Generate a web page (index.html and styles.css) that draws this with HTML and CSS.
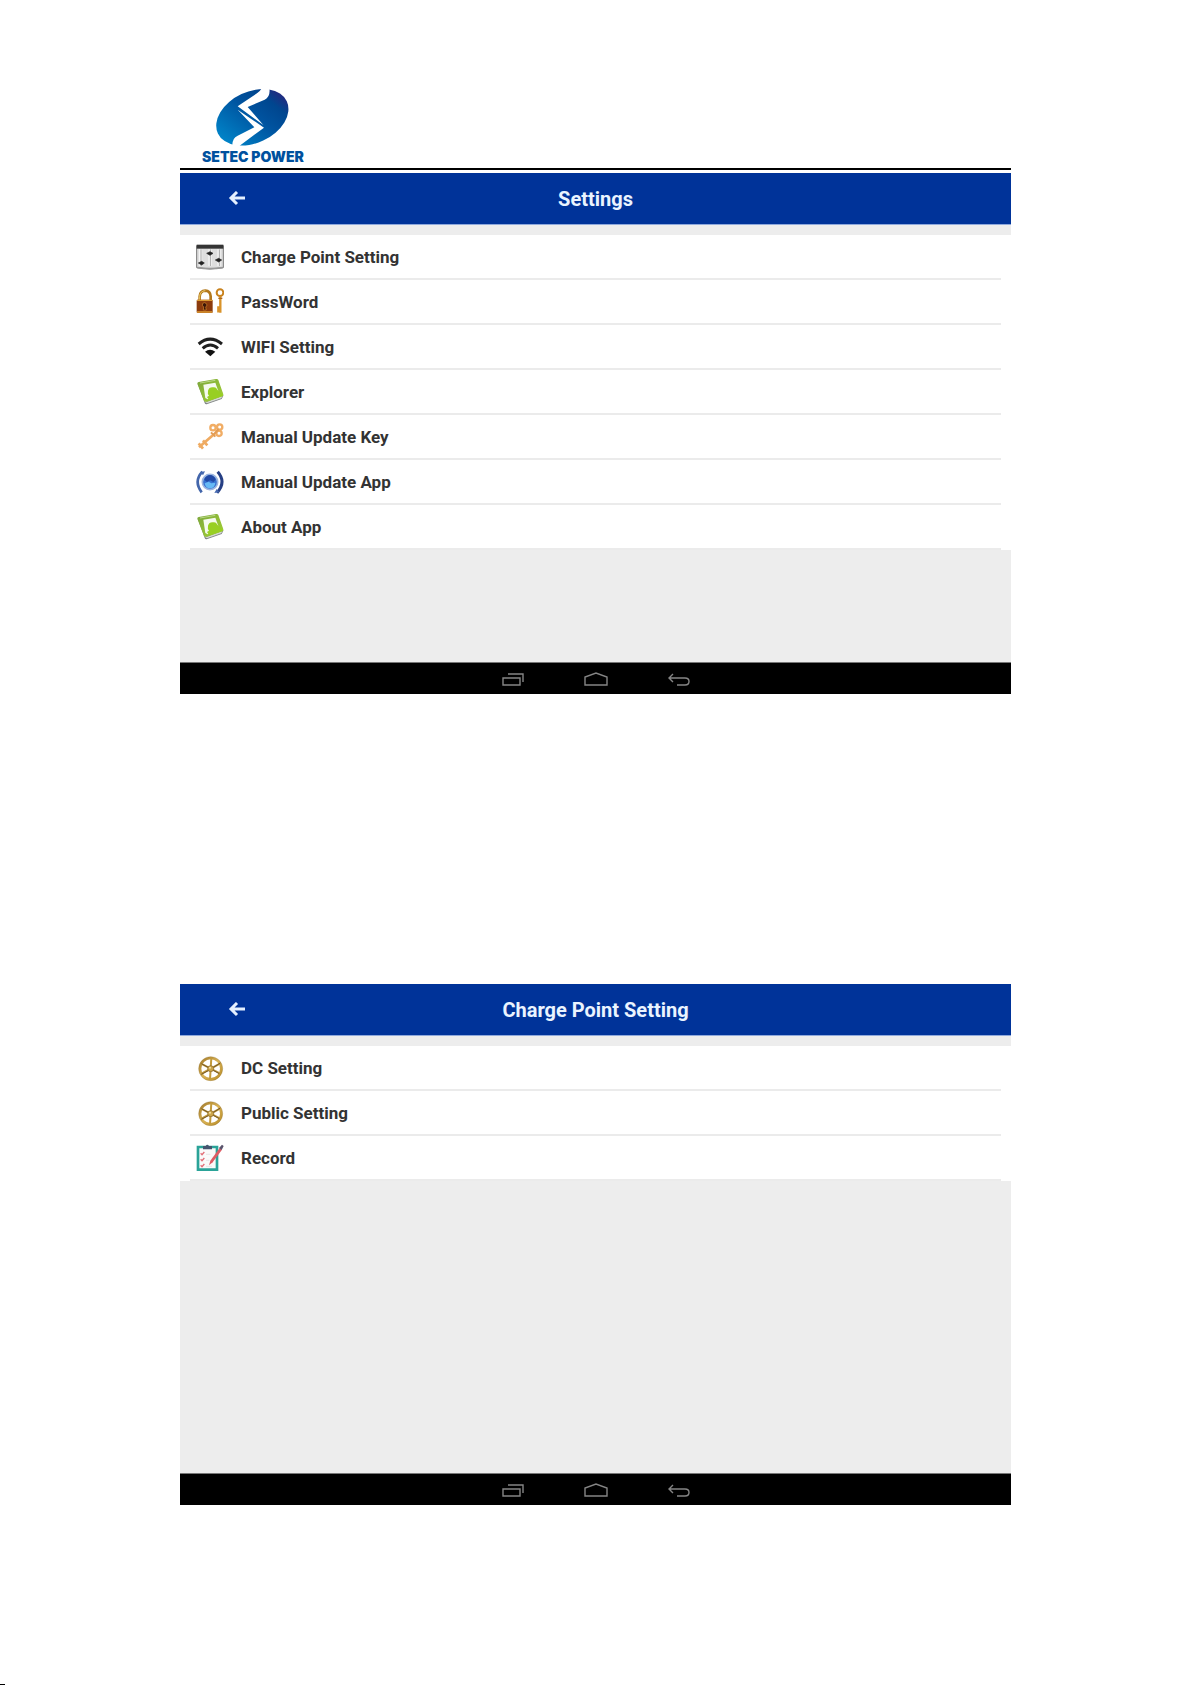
FILE: index.html
```html
<!DOCTYPE html>
<html lang="en">
<head>
    <meta charset="UTF-8">
    <meta name="viewport" content="width=device-width, initial-scale=1.0">
    <title>Setec Power - Settings</title>
    <link rel="stylesheet" href="styles.css">
</head>
<body>
    <!-- Shared icons -->
    <svg class="sprite" aria-hidden="true">
        <defs>
            <linearGradient id="green" x1="0" y1="0" x2="1" y2="1">
                <stop offset="0" stop-color="#7ba53c"/>
                <stop offset="1" stop-color="#a5d433"/>
            </linearGradient>
            <linearGradient id="gold" x1="0" y1="0" x2="1" y2="1">
                <stop offset="0" stop-color="#a37b2a"/>
                <stop offset="0.5" stop-color="#d9b356"/>
                <stop offset="1" stop-color="#b98d28"/>
            </linearGradient>
        </defs>
        <symbol id="arrow" viewBox="0 0 18 16">
            <path d="M9 1L3 7l6 6M3 7h14" fill="none" stroke="#e4f0ff" stroke-width="3"/>
        </symbol>
        <symbol id="book" viewBox="0 0 84 84">
            <path d="M5 17L26 75q2 5 8 3l43-15 5-10-15-40z" fill="#7f8384"/>
            <path d="M6 18L26 68l7 3 47-18-4 8-43 15-6-4z" fill="#d5d9d2"/>
            <path d="M4 17q0-4 4-5L60 3q5-1 7 3l15 43q1 4-3 6L33 71q-6 2-9-3z" fill="url(#green)"/>
            <path d="M22 20l36-6 13 36-36 14-7-4z" fill="#f5faef"/>
            <path d="M36 38q3-11 15-10 9-2 13 7l16 15-2 5-38 12-7-10 6-4q-5-6-3-15z" fill="#98cf23"/>
            <path d="M12 15l46-8" stroke="#b9d887" stroke-width="3"/>
        </symbol>
        <symbol id="wheel" viewBox="0 0 84 84">
            <circle cx="44" cy="44" r="32" fill="none" stroke="url(#gold)" stroke-width="8"/>
            <circle cx="44" cy="44" r="36" fill="none" stroke="#8f6c2b" stroke-width="1"/>
            <path d="M46 11l-4 66M15 29l58 30M15 60l58-32" stroke="#c29a3b" stroke-width="6"/>
            <path d="M46 44l27-17M42 43L16 29M44 46L16 61M47 46l23 13" stroke="#74592d" stroke-width="3"/>
            <circle cx="44" cy="44" r="9" fill="#cda64a" stroke="#856428" stroke-width="2"/>
            <circle cx="42" cy="41" r="3" fill="#f7e5a6"/>
        </symbol>
        <symbol id="nav-recent" viewBox="0 0 22 14">
            <path d="M1 6h17v7H1zM6 2h15v8" fill="none" stroke="#858585" stroke-width="1.4"/>
        </symbol>
        <symbol id="nav-home" viewBox="0 0 24 14">
            <path d="M1 13V5l11-4 11 4v8z" fill="none" stroke="#858585" stroke-width="1.4"/>
        </symbol>
        <symbol id="nav-back" viewBox="0 0 22 14">
            <path d="M5 2L1 6l4 4M1 6h16q4 0 4 3.500t-4 3.500H9" fill="none" stroke="#858585" stroke-width="1.4"/>
        </symbol>
    </svg>

    <header class="page-header">
        <div class="logo">
            <svg width="73" height="57" viewBox="137 55 219 171">
                <defs>
                    <linearGradient id="logo-blue" gradientUnits="userSpaceOnUse" x1="140" y1="190" x2="350" y2="85">
                        <stop offset="0" stop-color="#0087cb"/>
                        <stop offset="0.55" stop-color="#00539f"/>
                        <stop offset="0.8" stop-color="#00468f"/>
                        <stop offset="1" stop-color="#29247c"/>
                    </linearGradient>
                </defs>
                <ellipse cx="246" cy="140" rx="114" ry="77" transform="rotate(-25 246 140)" fill="url(#logo-blue)"/>
                <path d="M274 52Q270 62 260 68L202 107L279 163L232 109L283 87Q301 78 297 52z" fill="#fff"/>
                <path d="M202 117L252 170L202 195Q184 202 186 230H204L211 223L281 171z" fill="#fff"/>
            </svg>
            <span>SETEC POWER</span>
        </div>
    </header>

    <!-- Settings screen -->
    <section class="screen">
        <div class="title-bar">
            <button type="button" class="back" aria-label="Back"><svg width="18" height="16"><use href="#arrow"/></svg></button>
            <h1>Settings</h1>
        </div>
        <ul class="menu">
            <li><a href="#">
                <svg viewBox="0 0 84 84">
                    <path d="M2 8h80v66q-40 8-80 0z" fill="#dedede" stroke="#777" stroke-width="3"/>
                    <path d="M2 5h80v12H2z" fill="#343434"/>
                    <path d="M14 19v50M42 19v50M69 19v50" stroke="#fafafa" stroke-width="9"/>
                    <path d="M15 19v50M43 19v50M70 19v50" stroke="#777" stroke-width="2"/>
                    <path d="M7 60l10-5 8 5-8 6zM32 31l10-5 9 5-9 6zM58 51l10-5 9 5-9 6z" fill="#222" stroke="#222" stroke-width="2"/>
                    <path d="M4 74q38 6 76 0" fill="none" stroke="#999" stroke-width="5"/>
                </svg>
                Charge Point Setting</a></li>
            <li><a href="#">
                <svg viewBox="0 0 84 84">
                    <path d="M11 40V25Q12 9 28 8q15 1 16 17v15" fill="none" stroke="#b3781c" stroke-width="8"/>
                    <path d="M11 39V25Q12 9 28 8" fill="none" stroke="#eccb67" stroke-width="3"/>
                    <rect x="2" y="35" width="48" height="40" rx="3" fill="#8c3b0d"/>
                    <path d="M3 37h46M3 72h46" stroke="#dd9b33" stroke-width="4"/>
                    <path d="M25 44q-7 1-6 8l4 5-1 9h9l-2-9q5-3 3-8-2-5-7-5z" fill="#3c1508" stroke="#d48a2f" stroke-width="2"/>
                    <circle cx="72" cy="14" r="10" fill="none" stroke="#c8821e" stroke-width="6"/>
                    <path d="M73 25v49M73 58h-6v12h7" fill="none" stroke="#d9932a" stroke-width="7"/>
                    <path d="M67 31h12" stroke="#a9661c" stroke-width="4"/>
                </svg>
                PassWord</a></li>
            <li><a href="#">
                <svg viewBox="0 0 84 84">
                    <path d="M8 33q34-29 70 0M20 46q23-20 46 0" fill="none" stroke="#202020" stroke-width="9"/>
                    <path d="M27 56q15-11 31 0L43 70z" fill="#111"/>
                </svg>
                WIFI Setting</a></li>
            <li><a href="#"><svg viewBox="0 0 84 84"><use href="#book"/></svg>Explorer</a></li>
            <li><a href="#">
                <svg viewBox="0 0 84 84">
                    <path d="M54 34L9 73M8 61l13 16M21 52l13 15" fill="none" stroke="#efab62" stroke-width="8"/>
                    <circle cx="51" cy="14" r="8" fill="none" stroke="#f1ad65" stroke-width="7"/>
                    <circle cx="71" cy="12" r="8" fill="none" stroke="#f1ad65" stroke-width="7"/>
                    <circle cx="69" cy="31" r="8" fill="none" stroke="#f1ad65" stroke-width="7"/>
                    <path d="M45 28l13 13M52 36l16-18" stroke="#e39d55" stroke-width="6"/>
                </svg>
                Manual Update Key</a></li>
            <li><a href="#">
                <svg viewBox="0 0 84 84">
                    <path d="M19 11Q-8 40 17 73" fill="none" stroke="#4366ab" stroke-width="8"/>
                    <path d="M65 11q27 31-2 63" fill="none" stroke="#263f84" stroke-width="9"/>
                    <path d="M27 10L13 12l8 10zM55 75l15-2-8-10z" fill="#4669b0"/>
                    <circle cx="42" cy="42" r="23" fill="#3771d1" stroke="#9bb5e0" stroke-width="5"/>
                    <path d="M25 35q5-14 17-14t17 14l-7 7-10-5-9 5z" fill="#2249a5"/>
                    <path d="M26 46l12-5 8 5 12-2q-2 17-16 17T26 46z" fill="#67baf5"/>
                </svg>
                Manual Update App</a></li>
            <li><a href="#"><svg viewBox="0 0 84 84"><use href="#book"/></svg>About App</a></li>
        </ul>
        <nav class="nav-bar">
            <button type="button" aria-label="Recent apps"><svg width="22" height="14"><use href="#nav-recent"/></svg></button>
            <button type="button" aria-label="Home"><svg width="24" height="14"><use href="#nav-home"/></svg></button>
            <button type="button" aria-label="Back"><svg width="22" height="14"><use href="#nav-back"/></svg></button>
        </nav>
    </section>

    <!-- Charge point screen -->
    <section class="screen">
        <div class="title-bar">
            <button type="button" class="back" aria-label="Back"><svg width="18" height="16"><use href="#arrow"/></svg></button>
            <h1>Charge Point Setting</h1>
        </div>
        <ul class="menu">
            <li><a href="#"><svg viewBox="0 0 84 84"><use href="#wheel"/></svg>DC Setting</a></li>
            <li><a href="#"><svg viewBox="0 0 84 84"><use href="#wheel"/></svg>Public Setting</a></li>
            <li><a href="#">
                <svg viewBox="0 0 84 84">
                    <path d="M6 9h57v68H6z" fill="#fafafa" stroke="#2aa398" stroke-width="8"/>
                    <path d="M21 16V6h8q5-8 10 0h9v10z" fill="#46556f"/>
                    <path d="M14 28l4 4 7-8M14 46l4 4 7-8M14 64l4 4 7-8" fill="none" stroke="#e26f78" stroke-width="4"/>
                    <path d="M30 31h13M30 49h10M30 67h18" stroke="#ddd" stroke-width="2"/>
                    <path d="M39 64l4-14 28-38 7 5-28 38z" fill="#de5c65"/>
                    <path d="M69 12l9-10 5 4-6 12z" fill="#59536b"/>
                </svg>
                Record</a></li>
        </ul>
        <nav class="nav-bar">
            <button type="button" aria-label="Recent apps"><svg width="22" height="14"><use href="#nav-recent"/></svg></button>
            <button type="button" aria-label="Home"><svg width="24" height="14"><use href="#nav-home"/></svg></button>
            <button type="button" aria-label="Back"><svg width="22" height="14"><use href="#nav-back"/></svg></button>
        </nav>
    </section>

    <hr class="page-mark">
</body>
</html>
```
FILE: styles.css
```css
* {
    box-sizing: border-box;
}

body {
    font-family: Roboto, Arial, sans-serif;
    background-color: white;
    margin: 0;
    padding: 89px 181px 0 180px;
    display: flex;
    flex-direction: column;
    min-height: 100vh;
}

.sprite {
    position: absolute;
    width: 0;
    height: 0;
}

button {
    background: none;
    border: none;
    padding: 0;
    cursor: pointer;
}

svg {
    display: block;
    flex-shrink: 0;
}

/* Page header */
.page-header {
    border-bottom: 2px solid black;
    padding: 0 22px 2px;
    margin-bottom: 3px;
}

.logo {
    display: inline-flex;
    flex-direction: column;
    align-items: center;
    gap: 2px;
    vertical-align: top;
}

.logo span {
    font-family: Inter, Arial, sans-serif;
    font-size: 14px;
    font-weight: 900;
    line-height: 18px;
    color: #00519e;
}

/* Device screens */
.screen {
    background-color: #ededed;
    aspect-ratio: 831 / 521;
    display: flex;
    flex-direction: column;
}

.screen + .screen {
    margin-top: 290px;
}

.title-bar {
    background-color: #003399;
    border-bottom: 1px solid #8fa9dc;
    color: #eaf4ff;
    height: 52px;
    display: grid;
    grid-template-columns: 1fr auto 1fr;
    align-items: center;
}

.title-bar h1 {
    font-size: 20px;
    font-weight: 700;
    line-height: 24px;
    margin: 0;
}

.back {
    justify-self: start;
    margin-left: 48px;
}

/* Menu */
.menu {
    background-color: white;
    list-style-type: none;
    margin: 10px 0 0;
    padding: 0 10px;
}

.menu li {
    border-bottom: 2px solid #ebebeb;
}

.menu a {
    display: flex;
    align-items: center;
    gap: 17px;
    height: 43px;
    padding-left: 6px;
    color: #333;
    font-size: 17px;
    font-weight: 700;
    text-decoration: none;
}

.menu svg {
    width: 28px;
    height: 28px;
}

/* Navigation bar */
.nav-bar {
    background-color: black;
    border-top: 1px solid #777;
    height: 32px;
    margin-top: auto;
    display: flex;
    justify-content: center;
    align-items: center;
    gap: 60px;
}

.page-mark {
    width: 5px;
    height: 1px;
    border: none;
    background-color: black;
    margin: auto 0 0 -180px;
}
```
